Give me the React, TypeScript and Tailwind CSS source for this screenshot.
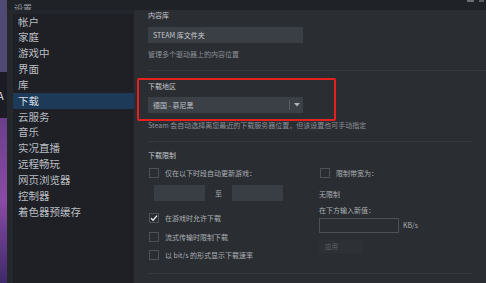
import type { ReactNode } from "react";

const font = { fontFamily: '"Noto Sans CJK SC", "Noto Sans", sans-serif' };

const NAV = [
	"帐户",
	"家庭",
	"游戏中",
	"界面",
	"库",
	"下载",
	"云服务",
	"音乐",
	"实况直播",
	"远程畅玩",
	"网页浏览器",
	"控制器",
	"着色器预缓存",
];

function Box({ checked = false }: { checked?: boolean }) {
	return (
		<div className="w-[10px] h-[10px] shrink-0 border border-[#4e5258] bg-[#2a2d32] flex items-center justify-center">
			{checked && (
				<svg width="8" height="8" viewBox="0 0 8 8">
					<path d="M1 4.2 L3.1 6.2 L7 1.6" fill="none" stroke="#e8e8e8" strokeWidth="1.4" />
				</svg>
			)}
		</div>
	);
}

function CheckRow({ checked, children }: { checked?: boolean; children: ReactNode }) {
	return (
		<div className="flex items-center h-[10px] gap-[6px]">
			<Box checked={checked} />
			<span className="text-[7px] leading-[10px] text-[#a9adb2] whitespace-nowrap">{children}</span>
		</div>
	);
}

export default function App() {
	return (
		<div className="w-[486px] h-[283px] flex overflow-hidden bg-[#24272c]" style={font}>
			{/* game art peeking out behind the dialog */}
			<div className="w-[7px] shrink-0 flex flex-col">
				<div className="h-[72px] bg-[#4f4a73]" />
				<div className="h-[46px] bg-[#1c1d24] flex items-center">
					<span className="text-[11px] text-[#d8d8e0] leading-none -ml-[3px]">A</span>
				</div>
				<div className="flex-1 bg-gradient-to-b from-[#6b3f8a] via-[#8a4aa6] to-[#3f2a6a]" />
			</div>

			<div className="flex-1 flex flex-col">
				{/* title bar */}
				<div className="h-[10px] shrink-0 bg-[#1f2227] flex items-end justify-between overflow-hidden">
					<span className="text-[9px] leading-[9px] text-[#9a9ea4] ml-[7px] -mb-[3px]">设置</span>
					<div className="flex items-start self-start gap-[5px] mr-[2px]">
						<div className="w-[7px] h-[2px] bg-[#6a6e74]" />
						<div className="w-[5px] h-[2px] bg-[#5a5e64]" />
					</div>
				</div>

				<div className="flex-1 flex">
					{/* sidebar */}
					<div className="w-[6px] shrink-0 bg-[#25282d]" />
					<div className="w-[121px] shrink-0 bg-[#1e2025] flex flex-col">
						<div className="h-[4px] bg-[#23262c]" />
						{NAV.map((item) => (
							<div
								key={item}
								className={`h-[15.83px] pl-[5px] flex items-center text-[10.5px] leading-none ${
									item === "下载" ? "bg-[#1d3a58] text-[#d6dbe0]" : "text-[#b9bdc2]"
								}`}
							>
								{item}
							</div>
						))}
					</div>

					{/* content */}
					<div className="flex-1 bg-[#2a2d32] pl-[14px] relative">
						<div className="text-[7px] leading-[10px] h-[10px] text-[#c3c6ca]">内容库</div>
						<div className="mt-[7px] w-[155px] h-[16px] bg-[#3a3e45] flex items-center pl-[5px] text-[7px] text-[#c6c9cd]">
							STEAM 库文件夹
						</div>
						<div className="mt-[6px] text-[7px] leading-[10px] h-[10px] text-[#8c9198]">管理多个驱动器上的内容位置</div>
						<div className="mt-[11px] h-px bg-[#363a40]" />

						<div className="mt-[10px] text-[7px] leading-[10px] h-[10px] text-[#c3c6ca]">下载地区</div>
						<div className="mt-[6px] w-[155px] h-[16px] bg-[#3b3f46] flex items-center text-[7px] text-[#bfc3c7]">
							<span className="flex-1 pl-[5px]">德国 - 慕尼黑</span>
							<div className="w-px h-[10px] bg-[#5a5e65]" />
							<div className="w-[13px] flex justify-center">
								<svg width="6" height="4" viewBox="0 0 6 4">
									<path d="M0 0 H6 L3 3.5 Z" fill="#b0b4b9" />
								</svg>
							</div>
						</div>
						<div className="mt-[7px] text-[7px] leading-[10px] h-[10px] text-[#8c9198] whitespace-nowrap">
							Steam 会自动选择离您最近的下载服务器位置，但该设置也可手动指定
						</div>
						<div className="mt-[11px] mr-[14px] h-px bg-[#363a40]" />

						<div className="mt-[8px] text-[7px] leading-[10px] h-[10px] text-[#c3c6ca]">下载限制</div>
						<div className="flex">
							<div className="w-[171px] shrink-0 pl-[1px] flex flex-col">
								<div className="mt-[8px]">
									<CheckRow>仅在以下时段自动更新游戏：</CheckRow>
								</div>
								<div className="mt-[7px] flex items-center pl-[5px]">
									<div className="w-[51px] h-[16px] bg-[#393d44]" />
									<span className="w-[27px] text-center text-[7px] text-[#a9adb2]">至</span>
									<div className="w-[51px] h-[16px] bg-[#393d44]" />
								</div>
								<div className="mt-[12px]">
									<CheckRow checked>在游戏时允许下载</CheckRow>
								</div>
								<div className="mt-[9px]">
									<CheckRow>流式传输时限制下载</CheckRow>
								</div>
								<div className="mt-[8px]">
									<CheckRow>以 bit/s 的形式显示下载速率</CheckRow>
								</div>
							</div>
							<div className="flex-1 flex flex-col">
								<div className="mt-[8px] pl-[1px]">
									<CheckRow>限制带宽为：</CheckRow>
								</div>
								<div className="mt-[11px] text-[7px] leading-[10px] h-[10px] text-[#a9adb2]">无限制</div>
								<div className="mt-[6px] text-[7px] leading-[10px] h-[10px] text-[#a9adb2]">在下方输入新值：</div>
								<div className="mt-[3px] flex items-center gap-[4px]">
									<div className="w-[80px] h-[15px] border border-[#4b4f56] bg-[#2a2d32]" />
									<span className="text-[7px] text-[#a9adb2]">KB/s</span>
								</div>
								<div className="mt-[7px] w-[44px] h-[13px] bg-[#2d3035] flex items-center pl-[6px] text-[6.5px] text-[#5f646a]">
									应用
								</div>
							</div>
						</div>
						<div className="mt-[13px] mr-[14px] h-px bg-[#363a40]" />

						{/* red annotation box */}
						<div className="absolute left-[3px] top-[68px] w-[199px] h-[43px] border-2 border-[#e3211e] rounded-[2px]" />
					</div>
				</div>
			</div>
		</div>
	);
}
